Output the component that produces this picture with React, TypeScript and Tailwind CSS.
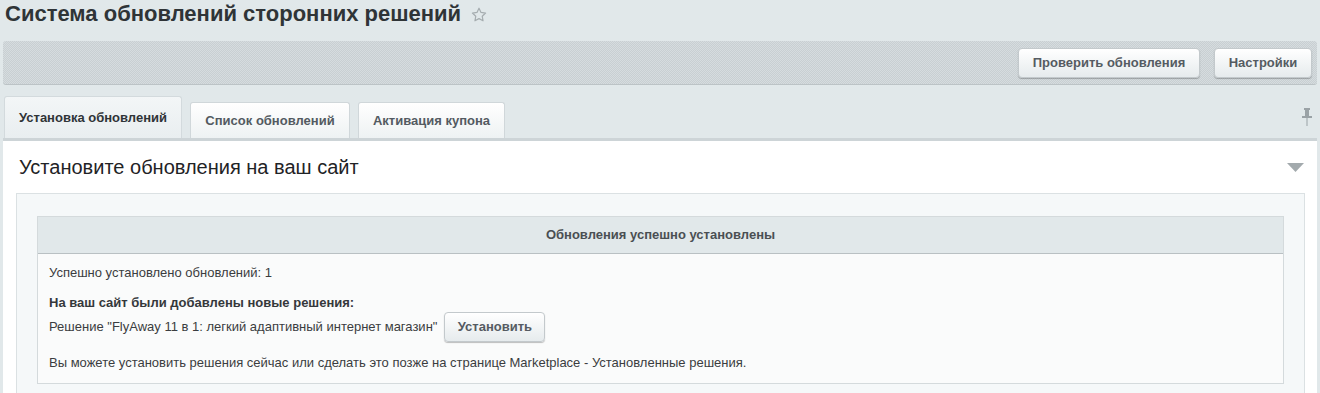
import React from "react";

const font = { fontFamily: '"Liberation Sans", Arial, sans-serif' };

const ToolButton: React.FC<{ label: string; className?: string }> = ({ label, className }) => (
    <button
        className={`h-[30px] rounded-[4px] border border-[#c3c9cc] bg-gradient-to-b from-white to-[#e6ebed] text-[13px] font-bold text-[#555b62] shadow-[0_1px_1px_rgba(0,0,0,0.25)] ${className ?? ""}`}>
        {label}
    </button>
);

const tabs = [
    {label: "Установка обновлений", w: "w-[178px]"},
    {label: "Список обновлений", w: "w-[160px]"},
    {label: "Активация купона", w: "w-[147px]"},
];

export default function App() {
    return (
        <div className="w-[1320px] h-[393px] overflow-hidden bg-[#e1e8ea] text-[#333]" style={font}>
            {/* title */}
            <div className="flex items-center h-[30px] pl-[5px]">
                <h1 className="text-[22px] leading-none font-bold text-[#2f3437] -mt-[2px]">Система обновлений сторонних решений</h1>
                <svg className="ml-[9px] -mt-[1px]" width="18" height="18" viewBox="0 0 24 24" fill="none" stroke="#a6adb0" strokeWidth="1.6" strokeLinejoin="round">
                    <path d="M12 3l2.7 5.6 6.1.8-4.5 4.2 1.1 6.1L12 16.8 6.6 19.7l1.1-6.1-4.5-4.2 6.1-.8z"/>
                </svg>
            </div>

            {/* toolbar */}
            <div
                className="mt-[11px] mx-[3px] h-[44px] rounded-[3px] flex items-center justify-end gap-[14px] pr-[5px] bg-[repeating-conic-gradient(#c8cfd2_0_25%,#d6dcdf_0_50%)] bg-[length:2px_2px] border-b border-[#bcc3c6]">
                <ToolButton label="Проверить обновления" className="w-[182px]"/>
                <ToolButton label="Настройки" className="w-[98px]"/>
            </div>

            {/* tabs */}
            <div className="mt-[11px] mx-[3px] flex items-end h-[42px] relative">
                <div className="flex items-end gap-[8px] pl-[1px]">
                    {tabs.map((t, i) => (
                        <div key={t.label}
                             className={i === 0
                                 ? `${t.w} h-[42px] flex items-center justify-center rounded-t-[3px] border border-b-0 border-[#d3dadd] bg-gradient-to-b from-[#f3f6f7] to-[#e9eef0] text-[13px] font-bold text-[#2f3437]`
                                 : `${t.w} h-[36px] flex items-center justify-center rounded-t-[3px] border border-b-0 border-[#d0d7da] bg-gradient-to-b from-white to-[#eef2f3] text-[13px] font-bold text-[#535a61]`}>
                            {t.label}
                        </div>
                    ))}
                </div>
                <svg className="absolute right-[4px] top-[12px]" width="12" height="18" viewBox="0 0 12 18" fill="#9aa2a6">
                    <rect x="3" y="0" width="6" height="2"/>
                    <rect x="4" y="2" width="4" height="6"/>
                    <rect x="1" y="8" width="10" height="2"/>
                    <rect x="5.5" y="10" width="1" height="8"/>
                </svg>
            </div>

            {/* content panel */}
            <div className="mx-[3px] border-t-[3px] border-[#cdd4d7] bg-white h-[300px] pl-[13px] pr-[12px]">
                <div className="flex items-center justify-between h-[52px] pl-[3px]">
                    <div className="text-[20px] text-[#1f2326]">Установите обновления на ваш сайт</div>
                    <svg width="17" height="9" viewBox="0 0 17 9" className="mr-[1px]">
                        <path d="M0 0h17L8.5 9z" fill="#a3aaad"/>
                    </svg>
                </div>
                <div className="border border-[#dbe1e3] bg-[#f5f8f9] pt-[22px] px-[20px] h-[260px]">
                    <div className="border border-[#d4dadc] bg-[#fafbfb]">
                        <div className="h-[37px] bg-[#e1e8ea] border-b border-[#b9c0c3] flex items-center justify-center text-[13px] font-bold text-[#4a4f53]">
                            Обновления успешно установлены
                        </div>
                        <div className="px-[11px] pt-[11px] pb-[12px] text-[13px] text-[#3a3d40]">
                            <div className="h-[16px] leading-[16px]">Успешно установлено обновлений: 1</div>
                            <div className="mt-[14px] h-[16px] leading-[16px] font-bold text-[#35383b]">На ваш сайт были добавлены новые решения:</div>
                            <div className="flex items-center gap-[7px] mt-[1px]">
                                <span>Решение "FlyAway 11 в 1: легкий адаптивный интернет магазин"</span>
                                <ToolButton label="Установить" className="w-[101px] h-[29px]"/>
                            </div>
                            <div className="mt-[13px] h-[16px] leading-[16px]">Вы можете установить решения сейчас или сделать это позже на странице Marketplace - Установленные решения.</div>
                        </div>
                    </div>
                </div>
            </div>
        </div>
    );
}
